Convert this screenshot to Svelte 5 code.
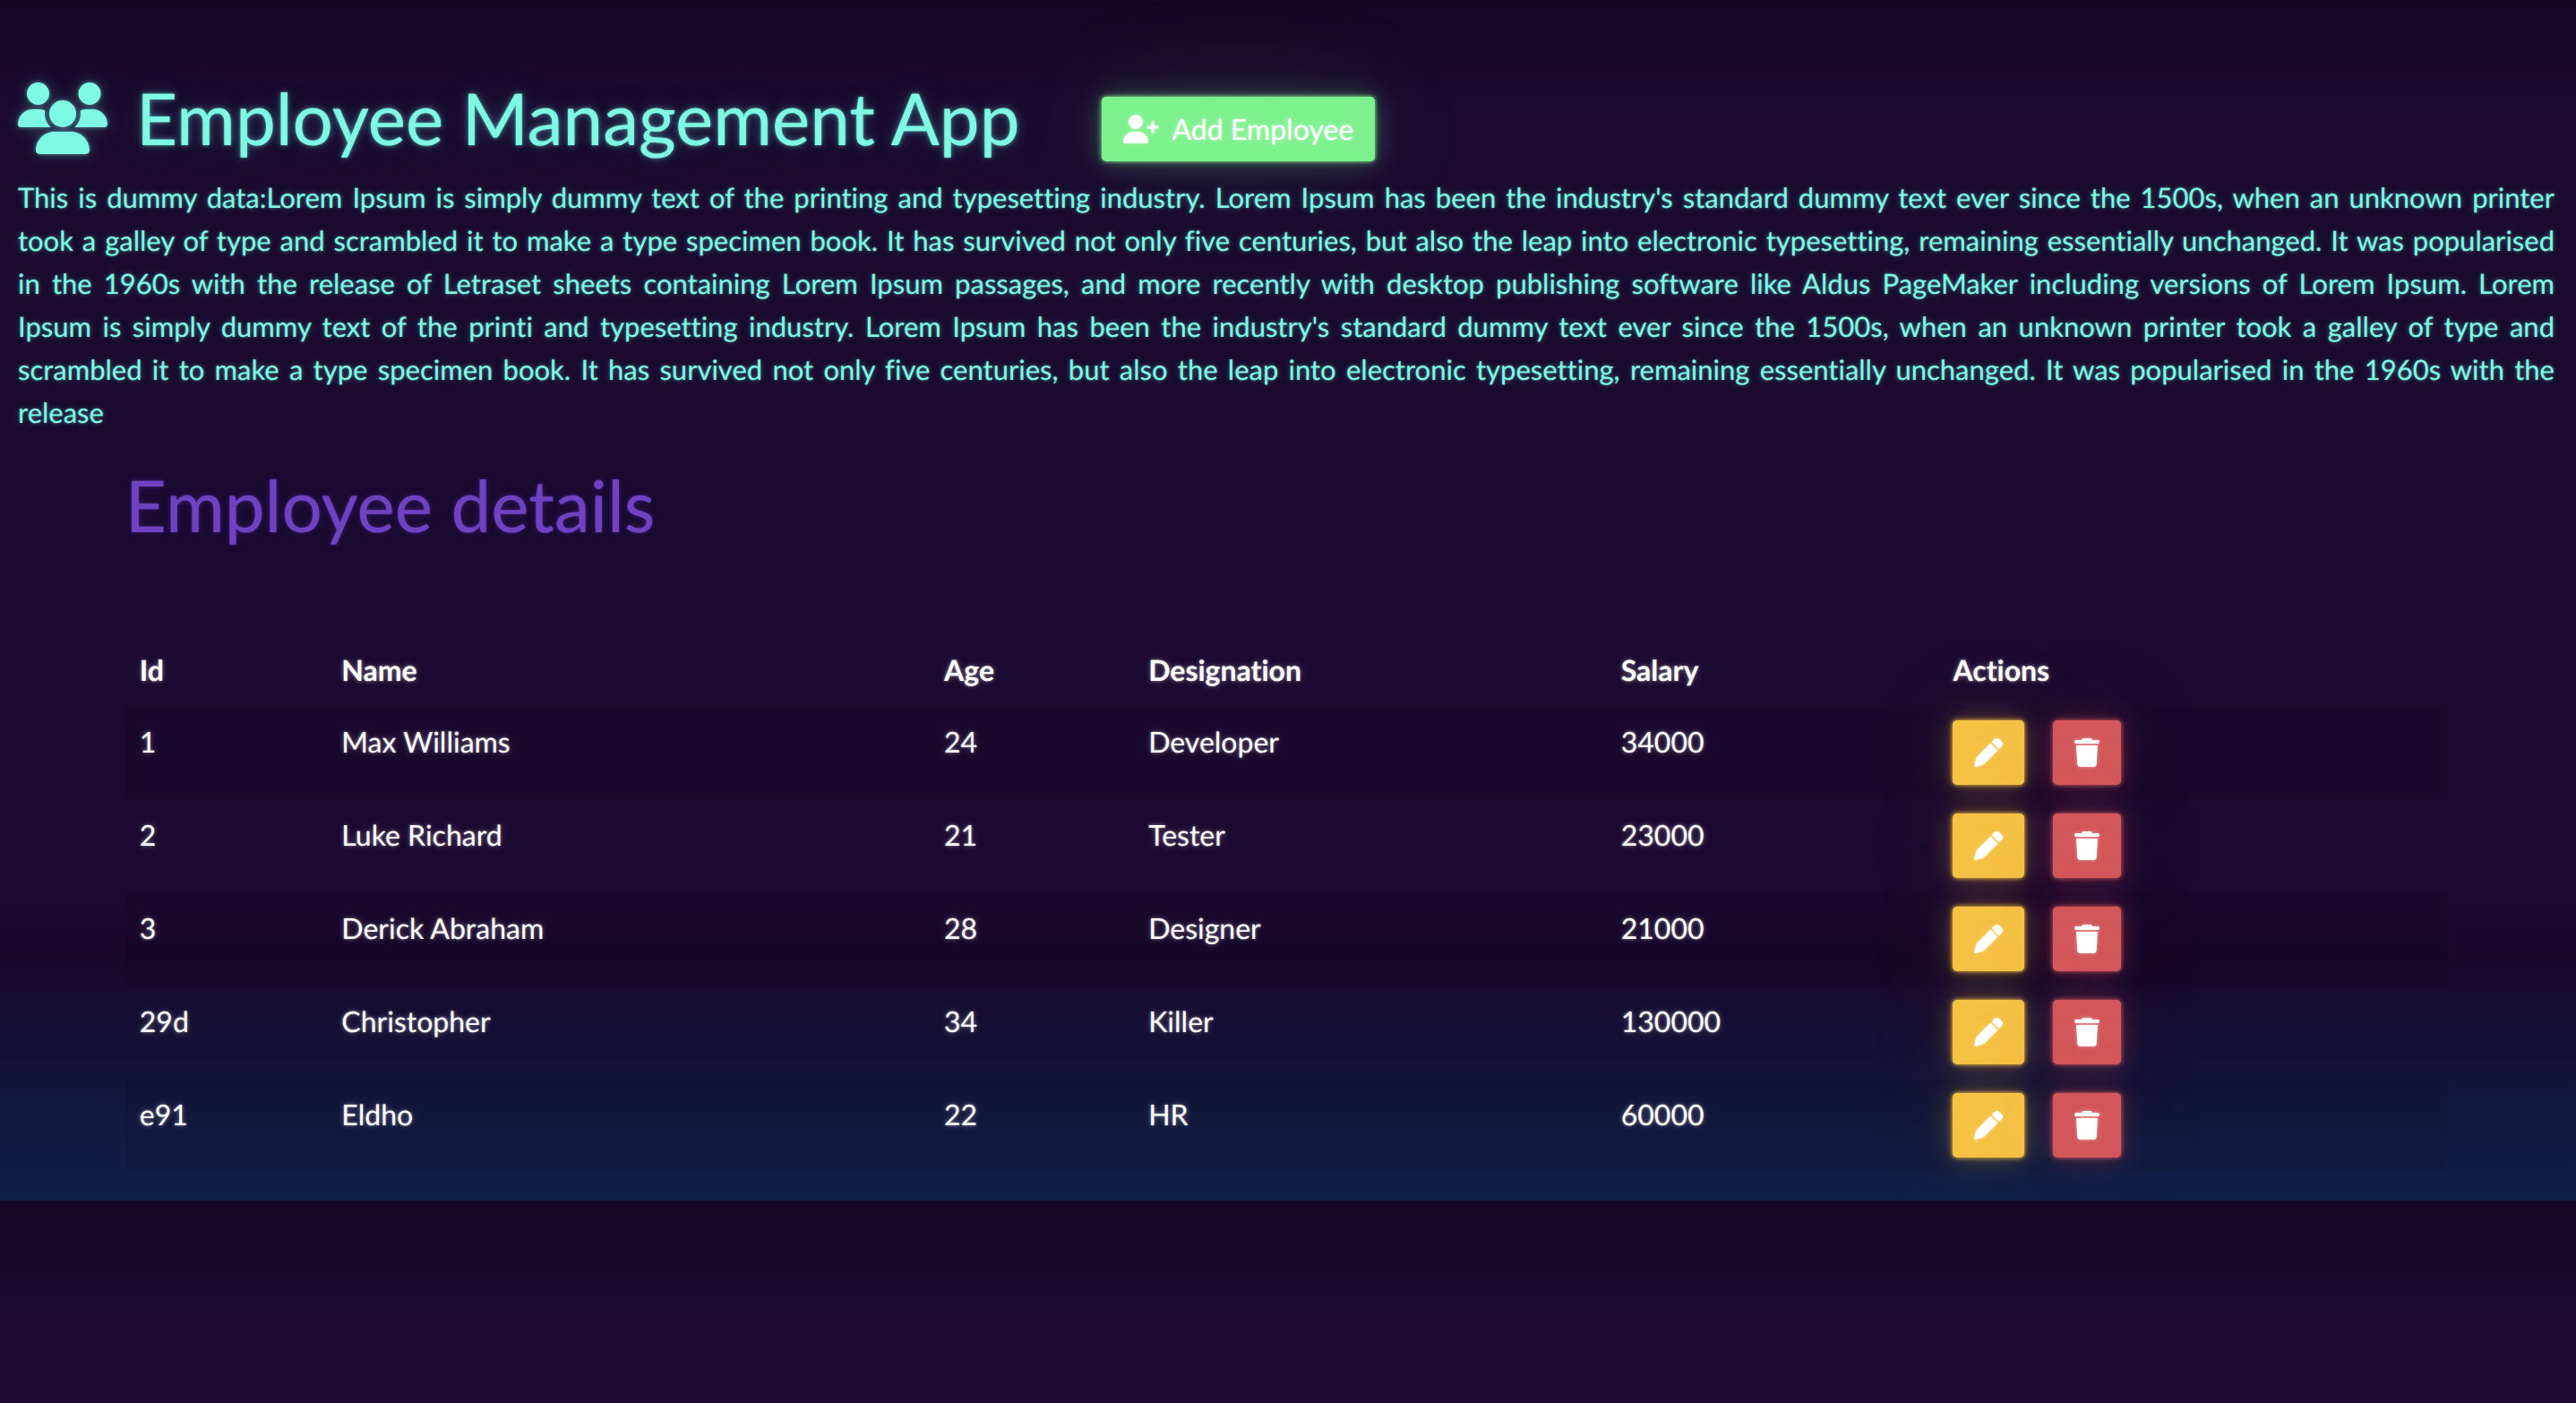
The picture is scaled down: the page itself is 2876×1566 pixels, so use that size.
<script>
  const employees = [
    { id: '1', name: 'Max Williams', age: 24, designation: 'Developer', salary: 34000 },
    { id: '2', name: 'Luke Richard', age: 21, designation: 'Tester', salary: 23000 },
    { id: '3', name: 'Derick Abraham', age: 28, designation: 'Designer', salary: 21000 },
    { id: '29d', name: 'Christopher', age: 34, designation: 'Killer', salary: 130000 },
    { id: 'e91', name: 'Eldho', age: 22, designation: 'HR', salary: 60000 },
  ];

  const introLines = [
    "This is dummy data:Lorem Ipsum is simply dummy text of the printing and typesetting industry. Lorem Ipsum has been the industry's standard dummy text ever since the 1500s, when an unknown printer",
    'took a galley of type and scrambled it to make a type specimen book. It has survived not only five centuries, but also the leap into electronic typesetting, remaining essentially unchanged. It was popularised',
    'in the 1960s with the release of Letraset sheets containing Lorem Ipsum passages, and more recently with desktop publishing software like Aldus PageMaker including versions of Lorem Ipsum. Lorem',
    "Ipsum is simply dummy text of the printi and typesetting industry. Lorem Ipsum has been the industry's standard dummy text ever since the 1500s, when an unknown printer took a galley of type and",
    'scrambled it to make a type specimen book. It has survived not only five centuries, but also the leap into electronic typesetting, remaining essentially unchanged. It was popularised in the 1960s with the',
    'release',
  ];
</script>

<div class="page">
  <header class="top">
    <h1 class="title">
      <svg class="users" viewBox="0 0 640 512" aria-hidden="true">
        <path d="M144 0a80 80 0 1 1 0 160A80 80 0 1 1 144 0zM512 0a80 80 0 1 1 0 160A80 80 0 1 1 512 0zM0 298.700C0 239.800 47.800 192 106.700 192h42.700c15.900 0 31 3.500 44.600 9.700c-1.300 7.200-1.900 14.700-1.900 22.300c0 38.200 16.800 72.500 43.300 96c-.2 0-.4 0-.7 0H21.300C9.600 320 0 310.400 0 298.700zM405.300 320c-.2 0-.4 0-.7 0c26.600-23.500 43.300-57.800 43.300-96c0-7.600-.7-15-1.900-22.300c13.600-6.300 28.700-9.700 44.600-9.700h42.700C592.200 192 640 239.800 640 298.700c0 11.800-9.600 21.300-21.300 21.300H405.300zM224 224a96 96 0 1 1 192 0 96 96 0 1 1-192 0zM128 485.300C128 411.700 187.700 352 261.300 352h117.400C452.300 352 512 411.700 512 485.300c0 14.700-11.900 26.700-26.700 26.700H154.700c-14.700 0-26.700-11.900-26.700-26.700z" />
      </svg>
      <span>Employee Management App</span>
    </h1>
    <button class="btn add" type="button">
      <svg class="user-plus" viewBox="0 0 640 512" aria-hidden="true">
        <path d="M96 128a128 128 0 1 1 256 0A128 128 0 1 1 96 128zM0 482.300C0 383.800 79.800 304 178.300 304h91.400C368.200 304 448 383.800 448 482.300c0 16.400-13.300 29.700-29.700 29.700H29.700C13.300 512 0 498.700 0 482.300zM504 312V248H440c-13.300 0-24-10.700-24-24s10.700-24 24-24h64V136c0-13.300 10.700-24 24-24s24 10.700 24 24v64h64c13.300 0 24 10.700 24 24s-10.700 24-24 24H552v64c0 13.300-10.700 24-24 24s-24-10.700-24-24z" />
      </svg>
      Add Employee
    </button>
  </header>

  <p class="intro">
    {#each introLines as line}
      <span class="line">{line}</span>{' '}
    {/each}
  </p>

  <main class="details">
    <h2>Employee details</h2>
    <table>
      <thead>
        <tr>
          <th class="c-id" scope="col">Id</th>
          <th class="c-name" scope="col">Name</th>
          <th class="c-age" scope="col">Age</th>
          <th class="c-role" scope="col">Designation</th>
          <th class="c-salary" scope="col">Salary</th>
          <th scope="col">Actions</th>
        </tr>
      </thead>
      <tbody>
        {#each employees as person (person.id)}
          <tr>
            <td>{person.id}</td>
            <td>{person.name}</td>
            <td>{person.age}</td>
            <td>{person.designation}</td>
            <td>{person.salary}</td>
            <td>
              <div class="actions">
                <button class="btn edit" type="button" aria-label="Edit {person.name}">
                  <svg class="pencil" viewBox="0 0 512 512" aria-hidden="true">
                    <path d="M410.300 231l11.300-11.300-33.900-33.900-62.100-62.100L291.700 89.800l-11.300 11.300-22.600 22.600L58.600 322.900c-10.400 10.400-18 23.300-22.200 37.400L1 480.700c-2.500 8.400-.2 17.500 6.100 23.700s15.300 8.500 23.700 6.100l120.300-35.400c14.100-4.200 27-11.800 37.400-22.200L387.700 253.700 410.300 231zM362.700 18.700L348.300 33.200 325.700 55.800 314.300 67.100l33.900 33.900 62.100 62.100 33.900 33.900 11.300-11.300 22.600-22.600 14.500-14.500c25-25 25-65.500 0-90.500L453.300 18.700c-25-25-65.500-25-90.500 0z" />
                  </svg>
                </button>
                <button class="btn delete" type="button" aria-label="Delete {person.name}">
                  <svg class="trash" viewBox="0 0 448 512" aria-hidden="true">
                    <path d="M135.200 17.700L128 32H32C14.300 32 0 46.300 0 64S14.300 96 32 96H416c17.700 0 32-14.300 32-32s-14.300-32-32-32H320l-7.200-14.300C307.400 6.800 296.300 0 284.200 0H163.800c-12.100 0-23.200 6.800-28.600 17.700zM416 128H32L53.200 467c1.600 25.300 22.600 45 47.900 45H346.900c25.300 0 46.300-19.700 47.900-45L416 128z" />
                  </svg>
                </button>
              </div>
            </td>
          </tr>
        {/each}
      </tbody>
    </table>
  </main>
</div>

<style>
  /* The gradient tile is as tall as the content and starts again below it. */
  :global(body) {
    margin: 0;
    background-color: #1a0930;
    background-image: linear-gradient(180deg, #140728 0%, #1a0a30 10%, #1a0930 75%, #17082c 80%, #102049 100%);
    color: #fff;
    font-family: Lato, 'Liberation Sans', sans-serif;
    font-size: 32px;
    line-height: 48px;
    text-rendering: geometricPrecision;
    font-variant-ligatures: none;
  }

  .page {
    --aqua: #7df9e4;
    display: flow-root;
    text-shadow: 0 0 2px rgb(255 255 255 / 0.3), 0 0 4px rgb(255 255 255 / 0.3), 0 0 10px rgb(255 255 255 / 0.2);
  }

  .top {
    display: flex;
    align-items: flex-end;
    gap: 92px;
    padding: 84px 24px 0 20px;
    margin-bottom: 16px;
  }

  .title {
    display: flex;
    align-items: center;
    gap: 32px;
    margin: 0;
    color: var(--aqua);
    font-size: 80px;
    font-weight: 400;
    line-height: 96px;
    text-shadow: 0 0 2px rgb(125 249 228 / 0.6), 0 0 6px rgb(125 249 228 / 0.4), 0 0 16px rgb(125 249 228 / 0.2), 0 0 64px rgb(125 249 228 / 0.1);
  }

  svg {
    display: block;
    flex: none;
    fill: currentColor;
  }

  .users {
    width: 100px;
    height: 80px;
    overflow: visible;
    filter: drop-shadow(0 0 2px rgb(125 249 228 / 0.5)) drop-shadow(0 0 8px rgb(125 249 228 / 0.25));
  }

  .intro {
    margin: 0 24px 32px 20px;
    color: var(--aqua);
    font-size: 31px;
    text-align: justify;
    text-shadow: 0 0 2px rgb(125 249 228 / 0.3), 0 0 4px rgb(125 249 228 / 0.3), 0 0 10px rgb(125 249 228 / 0.2);
  }

  /* Wide windows keep the set line breaks; narrower ones wrap freely. */
  @media (min-width: 2840px) {
    .line {
      display: block;
      text-align-last: justify;
    }

    .line:last-child {
      text-align-last: left;
    }
  }

  .details {
    margin: 0 5% 32px;
    margin-left: calc(5% - 4px);
  }

  h2 {
    margin: 0 0 96px;
    color: #6f42c1;
    font-size: 80px;
    font-weight: 400;
    line-height: 96px;
    text-shadow: 0 0 2px rgb(111 66 193 / 0.3), 0 0 4px rgb(111 66 193 / 0.3), 0 0 10px rgb(111 66 193 / 0.2);
  }

  table {
    width: 100%;
    border-collapse: collapse;
    table-layout: fixed;
  }

  th,
  td {
    box-sizing: border-box;
    padding: 16px;
    text-align: left;
    vertical-align: top;
  }

  tbody tr:nth-child(odd) {
    background: rgb(0 0 0 / 0.05);
  }

  .c-id { width: 8.7%; }
  .c-name { width: 25.95%; }
  .c-age { width: 8.8%; }
  .c-role { width: 20.35%; }
  .c-salary { width: 14.3%; }

  .actions {
    display: flex;
    gap: 32px;
  }

  .btn {
    display: flex;
    align-items: center;
    height: 72px;
    padding: 12px 24px;
    border: 0;
    border-radius: 5px;
    background: rgb(var(--tone));
    box-shadow: 0 0 4px rgb(var(--tone) / 0.9), 0 0 8px rgb(var(--tone) / 0.4), 0 0 32px rgb(var(--tone) / 0.3), 0 0 128px rgb(var(--tone) / 0.1);
    color: #fff;
    font: inherit;
    text-shadow: inherit;
    text-rendering: inherit;
  }

  .btn svg {
    height: 32px;
    overflow: visible;
    filter: drop-shadow(0 0 2px rgb(255 255 255 / 0.4));
  }

  .add {
    --tone: 125 241 142;
    gap: 14px;
  }

  .edit { --tone: 245 194 68; }
  .delete { --tone: 211 87 90; }
  .user-plus { width: 40px; }
  .pencil { width: 32px; }
  .trash { width: 28px; }
</style>
